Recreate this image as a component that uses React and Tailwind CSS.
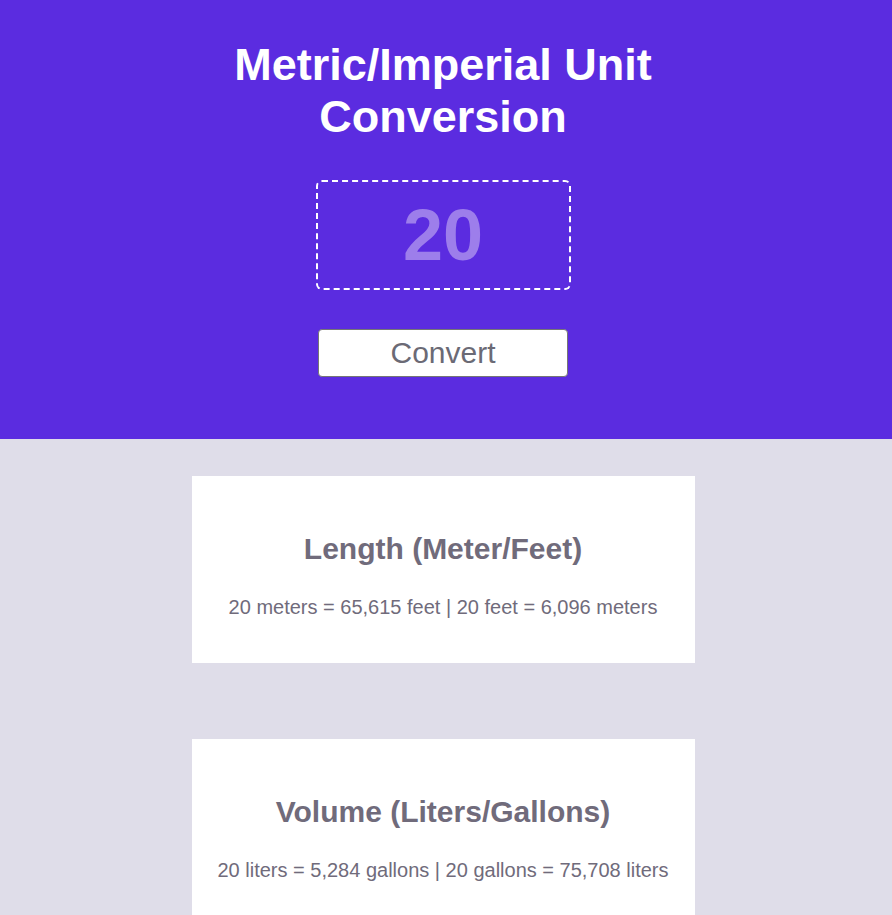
import React, { useState } from 'react';

// values as shown on the reference page for an input of 20
const cards = [
  {
    title: 'Length (Meter/Feet)',
    line: '20 meters = 65,615 feet | 20 feet = 6,096 meters',
  },
  {
    title: 'Volume (Liters/Gallons)',
    line: '20 liters = 5,284 gallons | 20 gallons = 75,708 liters',
  },
  {
    title: 'Mass (Kilograms/Pounds)',
    line: '20 kilos = 44,092 pounds | 20 pounds = 9,072 kilos',
  },
];

function ResultCard({ title, line }) {
  return (
    <div className="w-[503px] bg-white pt-[55px] pb-[42px] text-center text-[#706b7b]">
      <h2 className="text-[30px] leading-[36px] font-bold">{title}</h2>
      <p className="mt-[26px] text-[20px] leading-[28px]">{line}</p>
    </div>
  );
}

export default function App() {
  const [value, setValue] = useState('20');

  return (
    <div className="min-h-screen bg-[#dfdde9] font-['Liberation_Sans',Arial,sans-serif]">
      {/* Header */}
      <header className="bg-[#5b2ce0] pt-[39px] pb-[62px] pr-[6px] flex flex-col items-center">
        <h1 className="max-w-[500px] text-center text-white font-bold text-[45px] leading-[52px]">
          Metric/Imperial Unit Conversion
        </h1>
        <input
          type="text"
          value={value}
          onChange={(e) => setValue(e.target.value)}
          className="mt-[37px] w-[255px] h-[110px] bg-transparent border-2 border-dashed border-white rounded-md text-center text-[72px] font-bold text-[#9d7eeb] outline-none"
        />
        <button className="mt-[39px] w-[250px] h-[48px] bg-white border border-[#767676] rounded-[4px] text-[30px] leading-none text-[#6b6a75]">
          Convert
        </button>
      </header>

      {/* Results */}
      <main className="pt-[37px] pb-10 pr-[6px] flex flex-col items-center gap-[76px]">
        {cards.map((c) => (
          <ResultCard key={c.title} title={c.title} line={c.line} />
        ))}
      </main>
    </div>
  );
}
